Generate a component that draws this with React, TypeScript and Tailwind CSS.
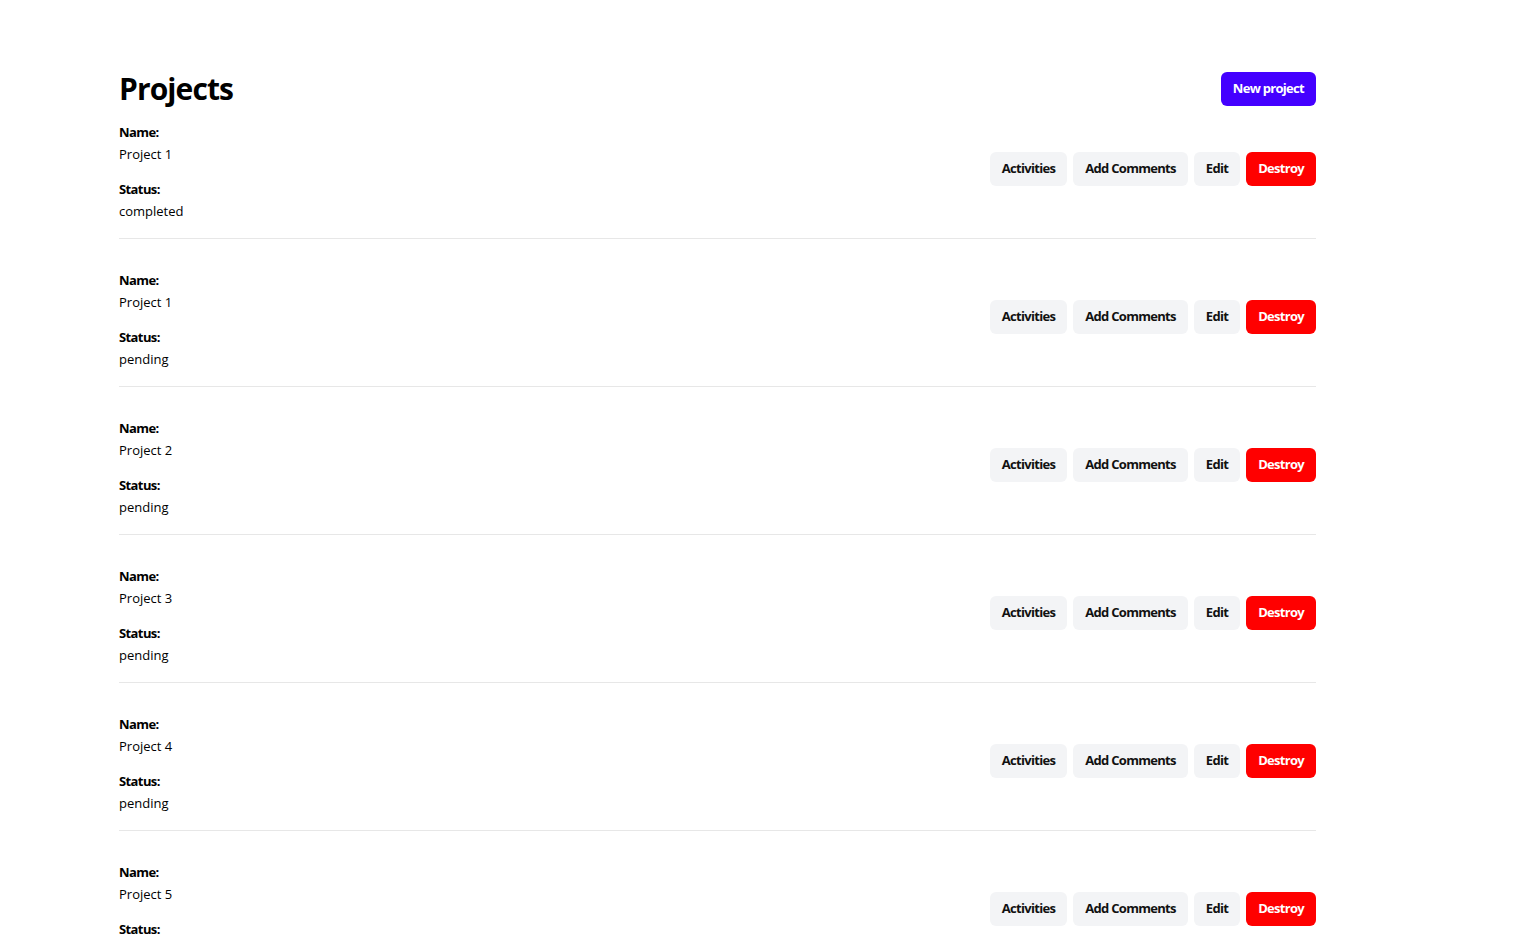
const projects = [
  { id: 1, name: "Project 1", status: "completed" },
  { id: 2, name: "Project 1", status: "pending" },
  { id: 3, name: "Project 2", status: "pending" },
  { id: 4, name: "Project 3", status: "pending" },
  { id: 5, name: "Project 4", status: "pending" },
  { id: 6, name: "Project 5", status: "pending" },
];

const grayButton =
  "h-[34px] rounded-md bg-[#f3f4f6] px-3 text-[13px] font-bold tracking-[-0.7px] text-[#111]";

const App = () => {
  return (
    <div
      className="min-h-screen bg-white text-black"
      style={{ fontFamily: '"Open Sans", "Noto Sans", sans-serif' }}
    >
      <div className="ml-[119px] w-[1197px] pt-[72px]">
        <div className="flex items-center justify-between pb-[15px]">
          <h1 className="text-[30px] font-bold leading-[34px] tracking-[-0.9px]">
            Projects
          </h1>
          <button className="h-[34px] rounded-md bg-[#4400ff] px-3 text-[13px] font-bold tracking-[-0.7px] text-white">
            New project
          </button>
        </div>

        <div>
          {projects.map((project) => (
            <div
              key={project.id}
              className="flex items-start justify-between border-b border-[#e7e7e7] pb-4 pt-[30px] first:pt-0"
            >
              <div className="text-[13px] leading-[22px]">
                <p className="font-bold tracking-[-0.6px]">Name:</p>
                <p>{project.name}</p>
                <p className="mt-[13px] font-bold tracking-[-0.6px]">Status:</p>
                <p>{project.status}</p>
              </div>
              <div className="mt-[31px] flex gap-[6px]">
                <button className={grayButton}>Activities</button>
                <button className={grayButton}>Add Comments</button>
                <button className={grayButton}>Edit</button>
                <button className="h-[34px] rounded-md bg-[#ff0000] px-3 text-[13px] font-bold tracking-[-0.7px] text-white">
                  Destroy
                </button>
              </div>
            </div>
          ))}
        </div>
      </div>
    </div>
  );
};

export default App;
